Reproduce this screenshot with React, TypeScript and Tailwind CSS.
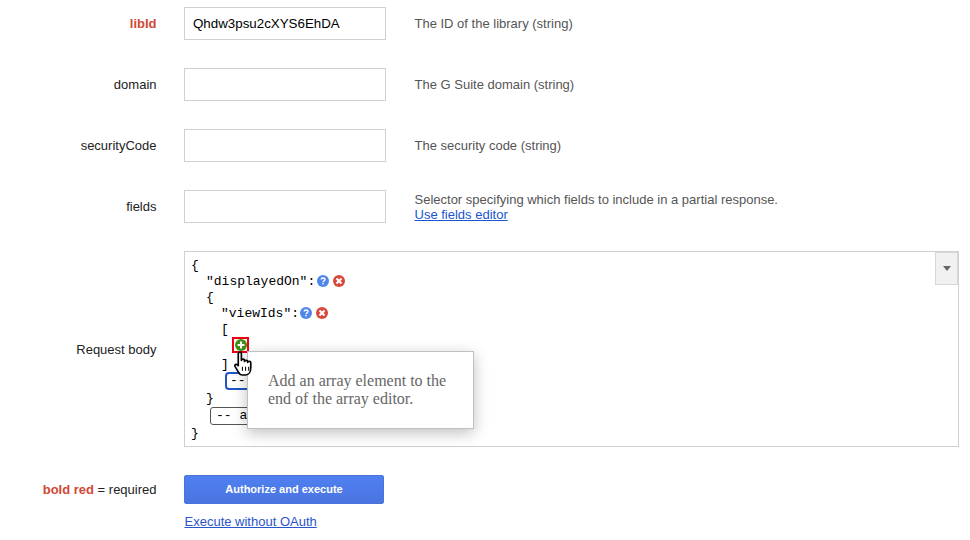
import React from "react";

const sans = "font-['Liberation_Sans',Arial,sans-serif]";

function Help() {
  return (
    <svg width="12" height="12" viewBox="0 0 12 12" className="shrink-0">
      <circle cx="6" cy="6" r="6" fill="#4f86ec" />
      <path d="M4.200 4.600C4.200 3.500 5 3 6 3s1.900.6 1.900 1.600c0 1.400-1.900 1.400-1.900 2.700" fill="none" stroke="#fff" strokeWidth="1.500" />
      <rect x="5.300" y="8" width="1.400" height="1.400" fill="#fff" />
    </svg>
  );
}

function Remove() {
  return (
    <svg width="12" height="12" viewBox="0 0 12 12" className="shrink-0">
      <circle cx="6" cy="6" r="6" fill="#d8473c" />
      <path d="M3.500 3.500l5 5M8.500 3.500l-5 5" stroke="#fff" strokeWidth="2.100" />
    </svg>
  );
}

function Row({ label, value, desc, link, red }: { label: string; value?: string; desc: string; link?: string; red?: boolean }) {
  return (
    <div className="flex items-center h-[33px] mb-[28px]">
      <div className={`w-[156.500px] text-right text-[13px] ${red ? "font-bold text-[#d14836]" : "text-[#222]"}`}>{label}</div>
      <div className="ml-[27.500px] w-[202px] h-[33px] border border-[#d0d0d0] bg-white pl-[8px] flex items-center text-[13.330px] text-black">{value}</div>
      <div className="ml-[28.500px] text-[13px] leading-[15px] text-[#555]">
        <div>{desc}</div>
        {link && <div className="text-[#1a55d0] underline">{link}</div>}
      </div>
    </div>
  );
}

export default function App() {
  return (
    <div className={`relative w-[970px] h-[540px] overflow-hidden bg-white pt-[7px] ${sans}`}>
      <Row label="libId" red value="Qhdw3psu2cXYS6EhDA" desc="The ID of the library (string)" />
      <Row label="domain" desc="The G Suite domain (string)" />
      <Row label="securityCode" desc="The security code (string)" />
      <Row label="fields" desc="Selector specifying which fields to include in a partial response." link="Use fields editor" />

      <div className="flex items-center h-[196px]">
        <div className="w-[156.500px] pt-[2px] text-right text-[13px] text-[#222]">Request body</div>
        <div className="relative ml-[27.500px] w-[775px] h-[196px] border border-[#d0d0d0] bg-white pl-[6px] pt-[6px] font-['Liberation_Mono',monospace] text-[13px] leading-[16px] text-black">
          <div className="h-[16px]">{"{"}</div>
          <div className="h-[16px] pl-[15px] flex items-center">
            <span>"displayedOn":</span>
            <span className="flex gap-[4px] ml-[2px] -mt-[2px]"><Help /><Remove /></span>
          </div>
          <div className="h-[16px] pl-[15px]">{"{"}</div>
          <div className="h-[16px] pl-[30px] flex items-center">
            <span>"viewIds":</span>
            <span className="flex gap-[4px] ml-[1px] -mt-[2px]"><Help /><Remove /></span>
          </div>
          <div className="h-[16px] pl-[30px]">[</div>
          <div className="h-[16px] pl-[41px] -mt-[1px] flex items-start">
            <span className="w-[17px] h-[16px] border-2 border-[#f0000f] bg-white flex items-center justify-center">
              <svg width="12" height="12" viewBox="0 0 13 13" className="shrink-0">
                <circle cx="6.500" cy="6.500" r="6.500" fill="#3e8f12" />
                <path d="M6.500 2.800v7.400M2.800 6.500h7.400" stroke="#fff" strokeWidth="2.200" />
              </svg>
            </span>
          </div>
          <div className="h-[16px] pl-[30px] mt-[4px]">]</div>
          <div className="h-[18px] pl-[34px] -mt-[1px]">
            <div className="w-[60px] h-[18px] border-2 border-[#2255c4] rounded-[4px] pl-[3px] leading-[14px]">-- a</div>
          </div>
          <div className="h-[16px] pl-[15px] mt-[1px]">{"}"}</div>
          <div className="pl-[19px]">
            <div className="w-[60px] h-[18px] border border-[#555] rounded-[3px] pl-[5px] leading-[16px]">-- a</div>
          </div>
          <div className="h-[16px] mt-[1px]">{"}"}</div>

          <div className="absolute right-0 top-0 w-[23px] h-[33px] bg-[#f1f1f1] border border-[#d8d8d8] flex items-center justify-center">
            <svg width="8" height="5" viewBox="0 0 8 5"><path d="M0 0h8L4 5z" fill="#666" /></svg>
          </div>
        </div>
      </div>

      <div className="flex items-center h-[29px] mt-[28px]">
        <div className="w-[156.500px] text-right text-[13px] text-[#222]"><b className="text-[#d14836]">bold red</b> = required</div>
        <div className="ml-[27.500px] w-[200px] h-[29px] rounded-[2px] bg-linear-to-b from-[#4f80f0] to-[#4a75e0] border border-[#4a74da] text-white font-bold text-[11px] flex items-center justify-center">Authorize and execute</div>
      </div>
      <div className="ml-[184.500px] mt-[10px] text-[13px] leading-[15px] text-[#2a55c8] underline">Execute without OAuth</div>

      <div className="absolute left-[247px] top-[351px] w-[227px] h-[78px] bg-white border border-[#c0c0c0] shadow-[0_4px_14px_rgba(0,0,0,0.25)] pl-[20px] pt-[20px] font-['Liberation_Serif',serif] text-[16px] leading-[18px] text-[#666]">
        Add an array element to the<br />end of the array editor.
      </div>

      <svg className="absolute left-[233px] top-[351px]" width="22" height="25" viewBox="0 0 21 24">
        <path d="M5 13V2.500c0-2 3-2 3 0V9c0-1.500 3-1.500 3 0v1c0-1.500 3-1.500 3 0v1c0-1.500 3-1.500 3 0v5c0 4-2 7-5 7H9c-2 0-3-1-4-3l-3-5c-1-2 1-3 3-1z" fill="#fff" stroke="#000" strokeWidth="1.600" strokeLinejoin="round" />
        <path d="M9 15v4M12 15v4M15 15v4" stroke="#000" strokeWidth="1" />
      </svg>
    </div>
  );
}
